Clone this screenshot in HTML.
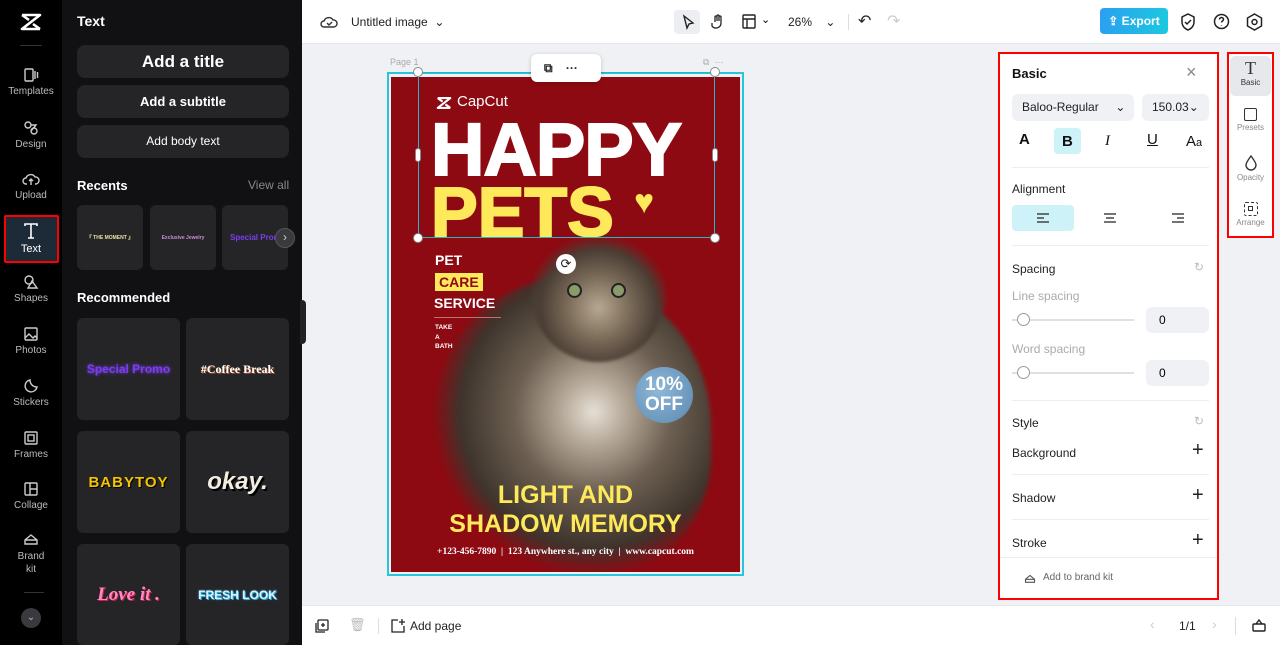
<!DOCTYPE html>
<html><head><meta charset="utf-8"><style>
*{box-sizing:border-box;margin:0;padding:0}
body{width:1280px;height:645px;overflow:hidden;font-family:"Liberation Sans",sans-serif;background:#eff1f4;position:relative}
.abs{position:absolute}
.rail{left:0;top:0;width:62px;height:645px;background:#000}
.ri{position:absolute;left:0;width:62px;text-align:center;color:#bbb;font-size:10px}
.ri svg{display:block;margin:0 auto 3px}
.panel{left:62px;top:0;width:240px;height:645px;background:#111113}
.btn{position:absolute;left:15px;width:212px;background:#252528;border-radius:8px;color:#fff;font-weight:bold;text-align:center}
.card{position:absolute;background:#252528;border-radius:6px;display:flex;align-items:center;justify-content:center}
.top{left:302px;top:0;width:978px;height:44px;background:#fff;border-bottom:1px solid #e5e7ea}
.bot{left:302px;top:605px;width:978px;height:40px;background:#fff;border-top:1px solid #e5e7ea}
.rp{left:998px;top:52px;width:221px;height:548px;background:#fff;border:2px solid #f00}
.lbl{position:absolute;left:12px;font-size:12px;color:#222}
.hr{position:absolute;left:12px;width:197px;height:1px;background:#eceef0}
</style></head><body>
<div class="abs rail">
 <svg class="abs" style="left:19px;top:12px" width="24" height="20" viewBox="0 0 24 20" fill="none" stroke="#fff" stroke-width="2.6" stroke-linejoin="round"><path d="M3 3h18L3 17h18M3 3l7 5M21 17l-7-5"/></svg>
 <div class="abs" style="left:20px;top:45px;width:22px;height:1px;background:#333"></div>
 <div class="ri" style="top:67px"><svg width="16" height="16" viewBox="0 0 16 16" fill="none" stroke="#ccc" stroke-width="1.4"><rect x="2" y="2" width="8" height="12" rx="1"/><path d="M12 4v8M14.5 5v6"/></svg>Templates</div>
 <div class="ri" style="top:120px"><svg width="16" height="16" viewBox="0 0 16 16" fill="none" stroke="#ccc" stroke-width="1.4"><circle cx="5" cy="5" r="3"/><circle cx="11" cy="11" r="3"/><path d="M8 5h5l-5 6"/></svg>Design</div>
 <div class="ri" style="top:171px"><svg width="18" height="16" viewBox="0 0 18 16" fill="none" stroke="#ccc" stroke-width="1.4"><path d="M5 13H4a3 3 0 010-6 5 5 0 019-1 3 3 0 011 7h-1M9 8v6M7 10l2-2 2 2"/></svg>Upload</div>
 <div class="abs" style="left:4px;top:215px;width:55px;height:48px;border:2px solid #f00;background:#1d2a38;border-radius:2px"></div>
 <div class="ri" style="top:222px;color:#fff;font-size:11px"><svg width="18" height="18" viewBox="0 0 18 18" fill="none" stroke="#fff" stroke-width="1.6"><path d="M3 4V2h12v2M9 2v14M6 16h6"/></svg>Text</div>
 <div class="ri" style="top:274px"><svg width="16" height="16" viewBox="0 0 16 16" fill="none" stroke="#ccc" stroke-width="1.4"><circle cx="6" cy="6" r="4"/><path d="M9 7l5 7H5z"/></svg>Shapes</div>
 <div class="ri" style="top:326px"><svg width="16" height="16" viewBox="0 0 16 16" fill="none" stroke="#ccc" stroke-width="1.4"><rect x="2" y="2" width="12" height="12" rx="1"/><path d="M2 12l4-4 4 4 2-2 2 2"/></svg>Photos</div>
 <div class="ri" style="top:378px"><svg width="16" height="16" viewBox="0 0 16 16" fill="none" stroke="#ccc" stroke-width="1.4"><path d="M14 9A6 6 0 117 2c0 4 3 7 7 7z"/></svg>Stickers</div>
 <div class="ri" style="top:430px"><svg width="16" height="16" viewBox="0 0 16 16" fill="none" stroke="#ccc" stroke-width="1.4"><rect x="2" y="2" width="12" height="12" rx="1"/><rect x="5" y="5" width="6" height="6"/></svg>Frames</div>
 <div class="ri" style="top:481px"><svg width="16" height="16" viewBox="0 0 16 16" fill="none" stroke="#ccc" stroke-width="1.4"><rect x="2" y="2" width="12" height="12" rx="1"/><path d="M7 2v12M7 8h7"/></svg>Collage</div>
 <div class="ri" style="top:531px;line-height:13px"><svg width="16" height="16" viewBox="0 0 16 16" fill="none" stroke="#ccc" stroke-width="1.4"><path d="M2 13V9l6-5 6 5v4zM2 9h12"/></svg>Brand<br>kit</div>
 <div class="abs" style="left:24px;top:592px;width:20px;height:1px;background:#333"></div>
 <div class="abs" style="left:21px;top:608px;width:20px;height:20px;border-radius:50%;background:#3a3a3e;color:#bbb;font-size:10px;text-align:center;line-height:20px">⌄</div>
</div>
<div class="abs panel">
 <div class="abs" style="left:15px;top:13px;color:#fff;font-weight:bold;font-size:14px">Text</div>
 <div class="btn" style="top:45px;height:33px;line-height:33px;font-size:17px">Add a title</div>
 <div class="btn" style="top:85px;height:33px;line-height:33px;font-size:13px">Add a subtitle</div>
 <div class="btn" style="top:125px;height:33px;line-height:33px;font-size:12px;font-weight:normal">Add body text</div>
 <div class="abs" style="left:15px;top:178px;color:#fff;font-weight:bold;font-size:13px">Recents</div>
 <div class="abs" style="left:186px;top:178px;color:#888;font-size:12px">View all</div>
 <div class="card" style="left:15px;top:205px;width:66px;height:65px;font-size:5px;color:#e8e4a0;font-weight:bold">『 THE MOMENT 』</div>
 <div class="card" style="left:88px;top:205px;width:66px;height:65px;font-size:5px;color:#c58fd6;font-weight:bold">Exclusive Jewelry</div>
 <div class="card" style="left:160px;top:205px;width:66px;height:65px;font-size:8px;color:#7a3ef0;font-weight:bold;justify-content:flex-start;padding-left:8px;overflow:hidden;white-space:nowrap">Special Promo</div>
 <div class="abs" style="left:213px;top:228px;width:20px;height:20px;border-radius:50%;background:#3a3a3e;border:1px solid #555;color:#ccc;font-size:12px;text-align:center;line-height:17px">›</div>
 <div class="abs" style="left:15px;top:290px;color:#fff;font-weight:bold;font-size:13px">Recommended</div>
 <div class="card" style="left:15px;top:318px;width:103px;height:102px;color:#7c3cf0;font-size:12px;font-weight:bold;text-shadow:0 0 3px #7c3cf0">Special Promo</div>
 <div class="card" style="left:124px;top:318px;width:103px;height:102px;color:#fff;font-family:'Liberation Serif',serif;font-weight:bold;font-size:12px;text-shadow:1px 1px 0 #a0522d">#Coffee Break</div>
 <div class="card" style="left:15px;top:431px;width:103px;height:102px;color:#f5c400;font-weight:bold;font-size:15px;letter-spacing:1px;text-shadow:1px 1px 0 #000">BABYTOY</div>
 <div class="card" style="left:124px;top:431px;width:103px;height:102px;color:#f2ede0;font-weight:bold;font-style:italic;font-size:24px;text-shadow:2px 2px 0 #000">okay.</div>
 <div class="card" style="left:15px;top:544px;width:103px;height:101px;color:#ff88c8;font-family:'Liberation Serif',serif;font-weight:bold;font-style:italic;font-size:19px;text-shadow:1px 1px 0 #d02040">Love it .</div>
 <div class="card" style="left:124px;top:544px;width:103px;height:101px;color:#d8f4ff;font-weight:bold;font-size:12px;text-shadow:0 0 2px #30b0e0,1px 1px 0 #30b0e0">FRESH LOOK</div>
 <div class="abs" style="left:238px;top:300px;width:6px;height:44px;background:#222;border-radius:0 4px 4px 0"></div>
</div>
<div class="abs top">
 <svg class="abs" style="left:18px;top:14px" width="18" height="16" viewBox="0 0 18 16" fill="none" stroke="#333" stroke-width="1.4"><path d="M5 13H4a3 3 0 010-6 5 5 0 019-1 3 3 0 011 7H5zM7 9l2 2 3-3"/></svg>
 <div class="abs" style="left:49px;top:15px;font-size:12px;color:#222">Untitled image &nbsp;⌄</div>
 <div class="abs" style="left:372px;top:10px;width:26px;height:24px;background:#eceef1;border-radius:4px"></div>
 <svg class="abs" style="left:379px;top:14px" width="14" height="16" viewBox="0 0 14 16" fill="none" stroke="#222" stroke-width="1.4"><path d="M3 2l9 7-4 1-2 4z"/></svg>
 <svg class="abs" style="left:409px;top:13px" width="14" height="17" viewBox="0 0 14 17" fill="none" stroke="#222" stroke-width="1.3"><path d="M4 9V4a1 1 0 012 0v4V3a1 1 0 012 0v5V4a1 1 0 012 0v6a5 5 0 01-9 3L1 10"/></svg>
 <svg class="abs" style="left:440px;top:14px" width="14" height="15" viewBox="0 0 14 15" fill="none" stroke="#222" stroke-width="1.4"><rect x="1" y="1" width="12" height="13" rx="1"/><path d="M1 5h12M5 5v9"/></svg>
 <div class="abs" style="left:459px;top:13px;font-size:11px">⌄</div>
 <div class="abs" style="left:486px;top:15px;font-size:12px;color:#222">26% &nbsp;&nbsp;&nbsp;⌄</div>
 <div class="abs" style="left:546px;top:14px;width:1px;height:16px;background:#ddd"></div>
 <div class="abs" style="left:556px;top:11px;font-size:16px;color:#222">↶</div>
 <div class="abs" style="left:585px;top:11px;font-size:16px;color:#ccc">↷</div>
 <div class="abs" style="left:798px;top:8px;width:68px;height:26px;border-radius:4px;background:linear-gradient(90deg,#2aa0f0,#1cc8e0);color:#fff;font-size:12px;font-weight:bold;line-height:26px;text-align:center">⇪ Export</div>
 <svg class="abs" style="left:878px;top:13px" width="16" height="18" viewBox="0 0 16 18" fill="none" stroke="#222" stroke-width="1.5"><path d="M8 1l6 3v5c0 4-3 7-6 8-3-1-6-4-6-8V4zM5 9l2 2 4-4"/></svg>
 <svg class="abs" style="left:911px;top:13px" width="17" height="17" viewBox="0 0 17 17" fill="none" stroke="#222" stroke-width="1.5"><circle cx="8.5" cy="8.5" r="7"/><path d="M6.5 6.5a2 2 0 114 0c0 1.5-2 1.5-2 3M8.5 12v.5"/></svg>
 <svg class="abs" style="left:944px;top:13px" width="17" height="18" viewBox="0 0 17 18" fill="none" stroke="#222" stroke-width="1.5"><path d="M8.5 1l7 4v8l-7 4-7-4V5z"/><circle cx="8.5" cy="9" r="2.5"/></svg>
</div>
<!-- canvas -->
<div class="abs" style="left:390px;top:57px;font-size:9px;color:#aaa">Page 1</div>
<div class="abs" style="left:703px;top:57px;font-size:9px;color:#aaa">⧉ &nbsp;···</div>
<div class="abs" style="left:387px;top:72px;width:357px;height:504px;border:2px solid #28c5dd"></div>
<div class="abs" style="left:391px;top:77px;width:349px;height:495px;background:#8e0a12;overflow:hidden">
 <!-- cat -->
 <div class="abs" style="left:40px;top:200px;width:280px;height:300px;border-radius:50% 50% 40% 40%;background:radial-gradient(ellipse at 58% 45%,#e6e0d6 0,#b5a898 14%,#6d6052 34%,#3e342c 58%,rgba(62,52,44,0) 70%);filter:blur(2px)"></div>
 <div class="abs" style="left:140px;top:150px;width:135px;height:135px;border-radius:50%;background:radial-gradient(circle at 50% 60%,#b7a892 0,#7a6a58 30%,#4a3e34 55%,rgba(74,62,52,0) 70%);filter:blur(1.5px)"></div>
 <div class="abs" style="left:176px;top:206px;width:15px;height:15px;border-radius:50%;background:#8a9a6a;border:2px solid #222"></div>
 <div class="abs" style="left:220px;top:206px;width:15px;height:15px;border-radius:50%;background:#8a9a6a;border:2px solid #222"></div>
 <div class="abs" style="left:244px;top:290px;width:58px;height:56px;border-radius:50%;background:radial-gradient(circle at 40% 40%,#8fb8d8,#5a88b0);color:#fff;font-weight:bold;font-size:19px;line-height:20px;text-align:center;padding-top:8px">10%<br>OFF</div>
 <svg class="abs" style="left:44px;top:19px" width="18" height="14" viewBox="0 0 24 20" fill="none" stroke="#fff" stroke-width="3" stroke-linejoin="round"><path d="M3 3h18L3 17h18M3 3l7 5M21 17l-7-5"/></svg>
 <div class="abs" style="left:66px;top:16px;color:#fff;font-size:15px">CapCut</div>
 <div class="abs" style="left:40px;top:38px;color:#fff;font-weight:bold;font-size:74px;line-height:70px;letter-spacing:-1px;-webkit-text-stroke:2px #fff">HAPPY</div>
 <div class="abs" style="left:40px;top:100px;color:#fde95a;font-weight:bold;font-size:70px;line-height:70px;-webkit-text-stroke:2px #fde95a">PETS</div>
 <div class="abs" style="left:243px;top:106px;color:#fde95a;font-size:34px">♥</div>
 <div class="abs" style="left:44px;top:175px;color:#fff;font-weight:bold;font-size:14px">PET</div>
 <div class="abs" style="left:44px;top:196px;background:#fde95a;color:#8e0a12;font-weight:bold;font-size:14px;padding:1px 4px">CARE</div>
 <div class="abs" style="left:43px;top:218px;color:#fff;font-weight:bold;font-size:14px">SERVICE</div>
 <div class="abs" style="left:43px;top:240px;width:67px;height:1px;background:#c07070"></div>
 <div class="abs" style="left:44px;top:246px;color:#fff;font-weight:bold;font-size:6.5px;line-height:9.5px">TAKE<br>A<br>BATH</div>
 <div class="abs" style="left:0;top:404px;width:349px;text-align:center;color:#fde95a;font-weight:bold;font-size:25px;line-height:29px">LIGHT AND<br>SHADOW MEMORY</div>
 <div class="abs" style="left:0;top:470px;width:349px;text-align:center;color:#fff;font-family:'Liberation Serif',serif;font-weight:bold;font-size:9.5px">+123-456-7890 &nbsp;| &nbsp;123 Anywhere st., any city &nbsp;| &nbsp;www.capcut.com</div>
</div>
<!-- selection -->
<div class="abs" style="left:418px;top:72px;width:297px;height:166px;border:1.5px solid #28b5cc"></div>
<div class="abs" style="left:413px;top:67px;width:10px;height:10px;border-radius:50%;background:#fff;border:1px solid #888"></div>
<div class="abs" style="left:710px;top:67px;width:10px;height:10px;border-radius:50%;background:#fff;border:1px solid #888"></div>
<div class="abs" style="left:413px;top:233px;width:10px;height:10px;border-radius:50%;background:#fff;border:1px solid #888"></div>
<div class="abs" style="left:710px;top:233px;width:10px;height:10px;border-radius:50%;background:#fff;border:1px solid #888"></div>
<div class="abs" style="left:415px;top:148px;width:6px;height:14px;border-radius:3px;background:#fff;border:1px solid #888"></div>
<div class="abs" style="left:712px;top:148px;width:6px;height:14px;border-radius:3px;background:#fff;border:1px solid #888"></div>
<div class="abs" style="left:556px;top:254px;width:20px;height:20px;border-radius:50%;background:#fff;color:#222;font-size:13px;text-align:center;line-height:20px">⟳</div>
<div class="abs" style="left:531px;top:54px;width:70px;height:28px;background:#fff;border-radius:6px;box-shadow:0 1px 4px rgba(0,0,0,.2);font-size:12px;color:#222;line-height:28px;padding-left:13px;font-weight:bold">⧉ &nbsp;&nbsp;&nbsp;···</div>
<!-- right panel -->
<div class="abs rp">
 <div class="abs" style="left:12px;top:12px;font-weight:bold;font-size:13px;color:#111">Basic</div>
 <div class="abs" style="left:186px;top:8px;font-size:18px;color:#888">×</div>
 <div class="abs" style="left:12px;top:40px;width:122px;height:27px;background:#f0f1f4;border-radius:6px;font-size:12px;line-height:27px;padding-left:10px;color:#222">Baloo-Regular &nbsp;&nbsp;&nbsp;&nbsp;⌄</div>
 <div class="abs" style="left:142px;top:40px;width:67px;height:27px;background:#f0f1f4;border-radius:6px;font-size:12px;line-height:27px;padding-left:10px;color:#222">150.03⌄</div>
 <div class="abs" style="left:54px;top:74px;width:27px;height:26px;background:#cdf2f8;border-radius:4px"></div>
 <div class="abs" style="left:19px;top:77px;font-size:15px;font-weight:bold;color:#111">A</div>
 <div class="abs" style="left:62px;top:79px;font-size:15px;font-weight:bold;color:#111">B</div>
 <div class="abs" style="left:105px;top:79px;font-size:15px;font-style:italic;font-family:'Liberation Serif',serif;color:#111">I</div>
 <div class="abs" style="left:147px;top:77px;font-size:15px;text-decoration:underline;color:#111">U</div>
 <div class="abs" style="left:186px;top:79px;font-size:15px;color:#111">A<span style="font-size:11px">a</span></div>
 <div class="hr" style="top:113px"></div>
 <div class="lbl" style="top:128px">Alignment</div>
 <div class="abs" style="left:12px;top:151px;width:62px;height:26px;background:#cdf2f8;border-radius:4px"></div>
 <svg class="abs" style="left:36px;top:158px" width="14" height="12"><path d="M1 2h12M1 6h7M1 10h12" stroke="#222" stroke-width="1.3"/></svg>
 <svg class="abs" style="left:103px;top:158px" width="14" height="12"><path d="M1 2h12M3 6h8M1 10h12" stroke="#222" stroke-width="1.3"/></svg>
 <svg class="abs" style="left:171px;top:158px" width="14" height="12"><path d="M1 2h12M6 6h7M1 10h12" stroke="#222" stroke-width="1.3"/></svg>
 <div class="hr" style="top:191px"></div>
 <div class="lbl" style="top:208px">Spacing</div>
 <div class="abs" style="left:194px;top:206px;font-size:12px;color:#bbb">↻</div>
 <div class="lbl" style="top:235px;color:#aaa">Line spacing</div>
 <div class="abs" style="left:12px;top:265px;width:122px;height:2px;background:#dde0e4"></div>
 <div class="abs" style="left:17px;top:259px;width:13px;height:13px;border-radius:50%;background:#fff;border:1px solid #999"></div>
 <div class="abs" style="left:146px;top:253px;width:63px;height:26px;background:#f0f1f4;border-radius:6px;font-size:12px;line-height:26px;padding-left:13px">0</div>
 <div class="lbl" style="top:288px;color:#aaa">Word spacing</div>
 <div class="abs" style="left:12px;top:318px;width:122px;height:2px;background:#dde0e4"></div>
 <div class="abs" style="left:17px;top:312px;width:13px;height:13px;border-radius:50%;background:#fff;border:1px solid #999"></div>
 <div class="abs" style="left:146px;top:306px;width:63px;height:26px;background:#f0f1f4;border-radius:6px;font-size:12px;line-height:26px;padding-left:13px">0</div>
 <div class="hr" style="top:346px"></div>
 <div class="lbl" style="top:362px">Style</div>
 <div class="abs" style="left:194px;top:360px;font-size:12px;color:#bbb">↻</div>
 <div class="lbl" style="top:392px">Background</div>
 <div class="abs" style="left:192px;top:385px;font-size:20px;color:#222;font-weight:300">+</div>
 <div class="hr" style="top:420px"></div>
 <div class="lbl" style="top:437px">Shadow</div>
 <div class="abs" style="left:192px;top:430px;font-size:20px;color:#222">+</div>
 <div class="hr" style="top:465px"></div>
 <div class="lbl" style="top:482px">Stroke</div>
 <div class="abs" style="left:192px;top:475px;font-size:20px;color:#222">+</div>
 <div class="abs" style="left:0;top:503px;width:217px;height:1px;background:#eceef0"></div>
 <svg class="abs" style="left:24px;top:519px" width="12" height="11" viewBox="0 0 16 14" fill="none" stroke="#555" stroke-width="1.5"><path d="M2 12V8l6-5 6 5v4zM2 8h12"/></svg>
 <div class="abs" style="left:43px;top:518px;font-size:10px;color:#666">Add to brand kit</div>
</div>
<div class="abs" style="left:1227px;top:52px;width:47px;height:186px;background:#fff;border:2px solid #f00"></div>
<div class="abs" style="left:1230px;top:56px;width:41px;height:40px;background:#e6e8eb;border-radius:5px"></div>
<div class="abs" style="left:1227px;top:58px;width:47px;text-align:center;font-size:8px;color:#333"><div style="font-family:'Liberation Serif',serif;font-size:18px;line-height:20px">T</div>Basic</div>
<div class="abs" style="left:1227px;top:108px;width:47px;text-align:center;font-size:8px;color:#888"><div style="margin:0 auto 2px;width:13px;height:13px;border:1.5px solid #333;border-radius:2px"></div>Presets</div>
<div class="abs" style="left:1227px;top:155px;width:47px;text-align:center;font-size:8px;color:#888"><svg width="14" height="16" viewBox="0 0 14 16" fill="none" stroke="#333" stroke-width="1.4"><path d="M7 1C4 5 2 8 2 10a5 5 0 0010 0c0-2-2-5-5-9z"/></svg><br>Opacity</div>
<div class="abs" style="left:1227px;top:202px;width:47px;text-align:center;font-size:8px;color:#888"><div style="margin:0 auto 2px;width:14px;height:14px;border:1.5px dashed #333;border-radius:2px;padding:3px"><div style="width:5px;height:5px;border:1.2px solid #333"></div></div>Arrange</div>
<div class="abs bot">
 <svg class="abs" style="left:13px;top:13px" width="14" height="14" viewBox="0 0 14 14" fill="none" stroke="#222" stroke-width="1.3"><rect x="3" y="1" width="10" height="10" rx="1"/><path d="M1 4v9h9M8 4v4M6 6h4"/></svg>
 <div class="abs" style="left:47px;top:11px;font-size:13px;color:#bbb">🗑</div>
 <div class="abs" style="left:76px;top:12px;width:1px;height:16px;background:#ddd"></div>
 <svg class="abs" style="left:88px;top:12px" width="16" height="16" viewBox="0 0 16 16" fill="none" stroke="#222" stroke-width="1.3"><path d="M14 8v6H2V2h6M12 1v6M9 4h6"/></svg>
 <div class="abs" style="left:108px;top:13px;font-size:12px;color:#222">Add page</div>
 <div class="abs" style="left:848px;top:10px;font-size:14px;color:#ccc">‹</div>
 <div class="abs" style="left:877px;top:13px;font-size:12px;color:#222">1/1</div>
 <div class="abs" style="left:910px;top:10px;font-size:14px;color:#ccc">›</div>
 <div class="abs" style="left:933px;top:11px;width:1px;height:18px;background:#ddd"></div>
 <svg class="abs" style="left:950px;top:12px" width="14" height="14" viewBox="0 0 14 14" fill="none" stroke="#222" stroke-width="1.4"><rect x="1" y="6" width="12" height="7" rx="1"/><path d="M4 6l3-4 3 4"/></svg>
</div>
</body></html>
